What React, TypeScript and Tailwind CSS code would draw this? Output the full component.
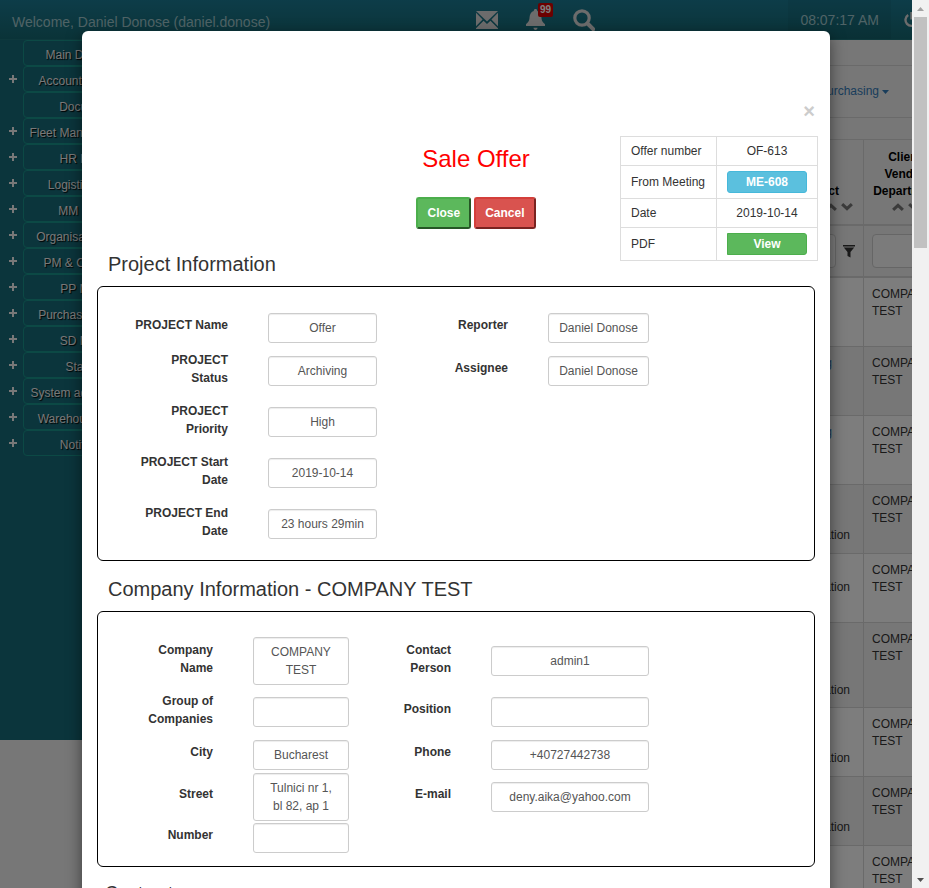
import React from "react";

type MenuEntry = { name: string; expandable: boolean };

const menu: MenuEntry[] = [
  { name: "Main Dashboard", expandable: false },
  { name: "Accounting Module", expandable: true },
  { name: "Documents", expandable: false },
  { name: "Fleet Manager Module", expandable: true },
  { name: "HR Module", expandable: true },
  { name: "Logistic Module", expandable: true },
  { name: "MM Module", expandable: true },
  { name: "Organisation Charts", expandable: true },
  { name: "PM & CS Module", expandable: true },
  { name: "PP Module", expandable: true },
  { name: "Purchasing Module", expandable: true },
  { name: "SD Module", expandable: true },
  { name: "Statistics", expandable: true },
  { name: "System administration", expandable: true },
  { name: "Warehouse Module", expandable: true },
  { name: "Notification", expandable: true },
];

type OfferRow = { lines: string[]; link?: boolean };

const offerRows: OfferRow[] = [
  { lines: ["", "", ""] },
  { lines: ["Meeting", "", ""], link: true },
  { lines: ["Meeting", "", ""], link: true },
  { lines: ["", "", "Installation"] },
  { lines: ["", "Installation", ""] },
  { lines: ["", "", "", "Installation"] },
  { lines: ["", "", "Installation"] },
  { lines: ["", "", "Installation"] },
  { lines: ["", "", ""] },
];

function PlusIcon() {
  return (
    <svg width="8" height="8" viewBox="0 0 8 8" fill="currentColor" aria-hidden="true">
      <path d="M3 0h2v3h3v2H5v3H3V5H0V3h3z" />
    </svg>
  );
}

function ChevronIcon({ down = false }: { down?: boolean }) {
  return (
    <svg
      width="12"
      height="8"
      viewBox="0 0 12 8"
      className={down ? "rotate-180" : ""}
      fill="#777"
      aria-hidden="true"
    >
      <path d="M6 0.3 11.9 5.8 9.800 7.900 6 4.400 2.200 7.900 0.1 5.800z" />
    </svg>
  );
}

function SortArrows() {
  return (
    <span className="flex h-3.5 items-center justify-center gap-1 pr-0.5">
      <ChevronIcon />
      <ChevronIcon down />
    </span>
  );
}

function TopBar() {
  return (
    <header className="flex h-10 shrink-0 items-center border-b border-[#1d7078] bg-linear-to-b from-[#1b7a92] to-[#156670] text-sm text-[#9fc6cc]">
      <p className="w-1/2 pt-1 pl-3 whitespace-nowrap">Welcome, Daniel Donose (daniel.donose)</p>
      <div className="ml-5 flex items-center text-white">
        <button type="button" aria-label="Messages">
          <svg width="22" height="18" viewBox="0 0 22 18" fill="#d8d8d8">
            <path d="M0 0h22L11 10.400z" />
            <path d="M0 1.800 6.600 8.500 0 15.200zM22 1.800 15.400 8.500 22 15.200z" />
            <path d="M7.600 9.700 11 13l3.400-3.300 7.600 7.500V18H0v-.8z" />
          </svg>
        </button>
        <button type="button" aria-label="Notifications" className="relative ml-7">
          <svg width="19" height="21" viewBox="0 0 19 21" fill="#d8d8d8">
            <path d="M9.500 0c1 0 1.700.7 1.700 1.600v.5c2.700.7 3.900 3 4.200 6 .3 3.400.7 5 3.600 7.100V17H0v-1.800c2.900-2.100 3.300-3.700 3.600-7.100.3-3 1.500-5.300 4.200-6v-.5C7.800.7 8.500 0 9.500 0z" />
            <path d="M7.500 18.800h4c0 1.300-.9 2.200-2 2.200s-2-.9-2-2.200z" />
          </svg>
          <span className="absolute -top-1.5 left-3 rounded-xs bg-[#d80000] px-0.5 text-[10px] leading-[14px] font-bold">
            99
          </span>
        </button>
        <button type="button" aria-label="Search" className="ml-7">
          <svg width="22" height="22" viewBox="0 0 22 22" fill="none" stroke="#d8d8d8">
            <circle cx="9" cy="9" r="7.200" strokeWidth="3.200" />
            <path d="M14.500 14.500 20.200 20.200" strokeWidth="4" strokeLinecap="round" />
          </svg>
        </button>
      </div>
      <time className="ml-auto flex h-full items-center bg-black/5 px-3 whitespace-nowrap">08:07:17 AM</time>
      <button type="button" aria-label="Log out" className="-mr-2 ml-3">
        <svg width="17" height="16" viewBox="0 0 17 16" fill="none" stroke="#d8d8d8" strokeWidth="2.400">
          <path d="M5.200 2.900a6 6 0 1 0 6.600 0M8.500 0v7.500" />
        </svg>
      </button>
    </header>
  );
}

function Sidebar() {
  return (
    <nav className="h-[700px] w-[156px] shrink-0 bg-[#166b79] text-xs text-[#f0f0f0]">
      <ul>
        {menu.map((entry) => (
          <li key={entry.name} className="flex h-[26px] items-center">
            <span className="w-[23px] shrink-0 pl-[9px]">{entry.expandable && <PlusIcon />}</span>
            <a
              href="#menu"
              className="flex h-[26px] flex-1 items-center justify-center rounded-sm border border-[#18928a] pt-1 whitespace-nowrap [text-shadow:1px_1px_1px_#000]"
            >
              {entry.name}
            </a>
          </li>
        ))}
      </ul>
    </nav>
  );
}

function OffersPage() {
  return (
    <main className="min-w-0 flex-1 overflow-hidden text-xs leading-[17px] text-[#333]">
      <div className="h-[26px] border-b border-[#d4d4d4]" />
      <div className="flex h-[52px] items-center justify-end border-b border-[#d4d4d4] pr-[23px]">
        <a href="#purchasing" className="flex items-center gap-[3px] text-[#337ab7]">
          Purchasing
          <svg width="7" height="4" viewBox="0 0 7 4" fill="currentColor" aria-hidden="true">
            <path d="M0 0h7L3.500 4z" />
          </svg>
        </a>
      </div>
      <table className="mt-[21px] w-[calc(100%+38px)] table-fixed border-separate border-spacing-0 border-t border-[#d4d4d4]">
        <thead>
          <tr className="align-bottom text-black">
            <th className="h-[86px] border-r border-b-2 border-[#d4d4d4] px-2 pt-2 pb-2.5 text-right">
              <span className="block pr-4">Contact</span>
              <span className="flex justify-end">
                <SortArrows />
              </span>
            </th>
            <th className="w-[86px] border-r border-b-2 border-[#d4d4d4] px-2 pt-2 pb-2.5">
              Client/
              <br />
              Vendor/
              <br />
              Department
              <SortArrows />
            </th>
          </tr>
          <tr>
            <td className="h-[52px] border-r border-b-2 border-[#d4d4d4] px-2">
              <div className="flex items-center gap-[7px]">
                <input
                  aria-label="Filter contact"
                  className="h-[34px] min-w-0 flex-1 rounded border border-[#ccc] bg-white/50"
                />
                <svg width="12" height="13" viewBox="0 0 12 13" fill="#333" aria-hidden="true">
                  <path d="M0 0h12v1.500H0zM0.800 2.500h10.400L7.500 7v5.500L4.500 11V7z" />
                </svg>
              </div>
            </td>
            <td className="border-r border-b-2 border-[#d4d4d4] px-2">
              <input
                aria-label="Filter client"
                className="block h-[34px] w-full rounded border border-[#ccc] bg-white/50"
              />
            </td>
          </tr>
        </thead>
        <tbody>
          {offerRows.map((row, index) => (
            <tr key={index} className="h-[69px] align-top odd:bg-[#fbfbfb] even:bg-[#efefef]">
              <td className="border-r border-b border-[#d4d4d4] py-2 pr-[13px] text-right">
                {row.lines.map((line, n) => (
                  <div key={n} className="h-[17px]">
                    {row.link && line ? (
                      <a href="#meeting" className="pr-[18px] text-[#337ab7]">
                        {line}
                      </a>
                    ) : (
                      line
                    )}
                  </div>
                ))}
              </td>
              <td className="border-r border-b border-[#d4d4d4] p-2">
                COMPANY
                <br />
                TEST
              </td>
            </tr>
          ))}
        </tbody>
      </table>
    </main>
  );
}

type FieldProps = { id: string; label: string; value: string };

const fieldStyle =
  "w-full min-w-0 resize-none rounded-[3px] border border-[#ccc] bg-white px-1 text-center text-xs leading-[18px] text-[#555] shadow-[inset_0_1px_1px_rgba(0,0,0,0.075)]";

function Field({ id, label, value }: FieldProps) {
  const twoLineLabel = label.includes("\n");
  return (
    <>
      <label
        htmlFor={id}
        className={
          twoLineLabel
            ? "pr-10 pb-1 text-right leading-[18px] font-bold whitespace-pre-line"
            : "pr-10 pb-1.5 text-right leading-[18px] font-bold"
        }
      >
        {label}
      </label>
      {value.includes("\n") ? (
        <textarea
          id={id}
          readOnly
          rows={2}
          defaultValue={value}
          className={`${fieldStyle} block h-12 overflow-hidden py-[5px]`}
        />
      ) : (
        <input id={id} readOnly defaultValue={value} className={`${fieldStyle} h-[30px]`} />
      )}
    </>
  );
}

function OfferSummary() {
  const name = "border border-[#ddd] px-2.5 font-normal text-left";
  const cell = "border border-[#ddd] text-center";
  return (
    <table className="w-[198px] border-collapse text-xs">
      <tbody>
        <tr className="h-[29px]">
          <th scope="row" className={`${name} w-24`}>
            Offer number
          </th>
          <td className={cell}>OF-613</td>
        </tr>
        <tr className="h-[33px]">
          <th scope="row" className={name}>
            From Meeting
          </th>
          <td className={cell}>
            <button
              type="button"
              className="mx-auto block h-[22px] w-20 rounded-[3px] border border-[#46b8da] bg-[#5bc0de] font-bold text-white"
            >
              ME-608
            </button>
          </td>
        </tr>
        <tr className="h-[29px]">
          <th scope="row" className={name}>
            Date
          </th>
          <td className={cell}>2019-10-14</td>
        </tr>
        <tr className="h-[33px]">
          <th scope="row" className={name}>
            PDF
          </th>
          <td className={cell}>
            <button
              type="button"
              className="mx-auto block h-[22px] w-20 rounded-r-[3px] border border-[#4cae4c] bg-[#5cb85c] font-bold text-white"
            >
              View
            </button>
          </td>
        </tr>
      </tbody>
    </table>
  );
}

const projectGrid = "grid grid-cols-[170fr_109fr_171fr_101fr_165fr] items-center";
const companyGrid = "grid grid-cols-[155fr_96fr_142fr_158fr_165fr] items-center";

function SaleOfferDialog() {
  return (
    <section
      role="dialog"
      aria-label="Sale Offer"
      className="mx-[82px] mt-[31px] rounded-md bg-white px-[15px] pt-[70px] pb-6 text-xs text-[#333] shadow-[0_5px_15px_rgba(0,0,0,0.5)]"
    >
      <div className="flex h-[21px] justify-end">
        <button type="button" aria-label="Close dialog" className="text-xl leading-[21px] font-bold text-[#ccc]">
          ×
        </button>
      </div>

      <div className="mt-3.5 -mr-[3px] flex justify-end">
        <div className="w-[288px] pt-2.5 text-center">
          <h1 className="text-2xl leading-[26px] text-[#f00]">Sale Offer</h1>
          <div className="mt-[25px] flex justify-center gap-[3px]">
            <button
              type="button"
              className="h-8 rounded-[3px] border-2 border-t-[#4cae4c] border-r-[#265726] border-b-[#265726] border-l-[#4cae4c] bg-[#5cb85c] px-[9px] font-bold text-white"
            >
              Close
            </button>
            <button
              type="button"
              className="h-8 rounded-[3px] border-2 border-t-[#d43f3a] border-r-[#7a2320] border-b-[#7a2320] border-l-[#d43f3a] bg-[#d9534f] px-[9px] font-bold text-white"
            >
              Cancel
            </button>
          </div>
        </div>
        <OfferSummary />
      </div>

      <h2 className="-mt-2 mb-[11px] ml-[11px] w-fit text-xl leading-[22px]">Project Information</h2>
      <div className="rounded-md border border-black pt-[26px] pb-4">
        <div className={projectGrid}>
          <Field id="project-name" label="PROJECT Name" value="Offer" />
          <Field id="reporter" label="Reporter" value="Daniel Donose" />
        </div>
        <div className={`${projectGrid} mt-2`}>
          <Field id="project-status" label={"PROJECT\nStatus"} value="Archiving" />
          <Field id="assignee" label="Assignee" value="Daniel Donose" />
        </div>
        <div className={`${projectGrid} mt-[11px]`}>
          <Field id="project-priority" label={"PROJECT\nPriority"} value="High" />
        </div>
        <div className={`${projectGrid} mt-[11px]`}>
          <Field id="project-start" label={"PROJECT Start\nDate"} value="2019-10-14" />
        </div>
        <div className={`${projectGrid} mt-[11px]`}>
          <Field id="project-end" label={"PROJECT End\nDate"} value="23 hours 29min" />
        </div>
      </div>

      <h2 className="mt-[17px] mb-[11px] ml-[11px] text-xl leading-[22px]">Company Information - COMPANY TEST</h2>
      <div className="rounded-md border border-black pt-[25px] pb-[13px]">
        <div className={companyGrid}>
          <Field id="company-name" label={"Company\nName"} value={"COMPANY\nTEST"} />
          <Field id="contact-person" label={"Contact\nPerson"} value="admin1" />
        </div>
        <div className={`${companyGrid} mt-[7px]`}>
          <Field id="company-group" label={"Group of\nCompanies"} value="" />
          <Field id="position" label="Position" value="" />
        </div>
        <div className={`${companyGrid} mt-2`}>
          <Field id="city" label="City" value="Bucharest" />
          <Field id="phone" label="Phone" value="+40727442738" />
        </div>
        <div className={`${companyGrid} mt-[3px]`}>
          <Field id="street" label="Street" value={"Tulnici nr 1,\nbl 82, ap 1"} />
          <Field id="email" label="E-mail" value="deny.aika@yahoo.com" />
        </div>
        <div className={`${companyGrid} mt-0.5`}>
          <Field id="number" label="Number" value="" />
        </div>
      </div>

      <h2 className="mt-4 ml-2 text-lg leading-5">Contract</h2>
    </section>
  );
}

function ScrollTrack() {
  return (
    <div className="flex w-[17px] shrink-0 flex-col items-center bg-[#f1f1f1]" aria-hidden="true">
      <div className="flex h-[17px] items-center">
        <svg width="7" height="4" viewBox="0 0 7 4" fill="#a3a3a3">
          <path d="M3.500 0 7 4H0z" />
        </svg>
      </div>
      <div className="h-[231px] w-[13px] bg-[#c1c1c1]" />
      <div className="mt-auto flex h-[17px] items-center">
        <svg width="7" height="4" viewBox="0 0 7 4" fill="#505050">
          <path d="M0 0h7L3.500 4z" />
        </svg>
      </div>
    </div>
  );
}

export default function App() {
  return (
    <div className="flex h-screen overflow-hidden font-['Liberation_Sans',Arial,sans-serif]">
      <div className="relative min-w-0 flex-1 overflow-hidden bg-[#efefef]">
        <TopBar />
        <div className="flex">
          <Sidebar />
          <OffersPage />
        </div>
        <div className="absolute inset-0 overflow-hidden bg-black/50">
          <SaleOfferDialog />
        </div>
      </div>
      <ScrollTrack />
    </div>
  );
}
